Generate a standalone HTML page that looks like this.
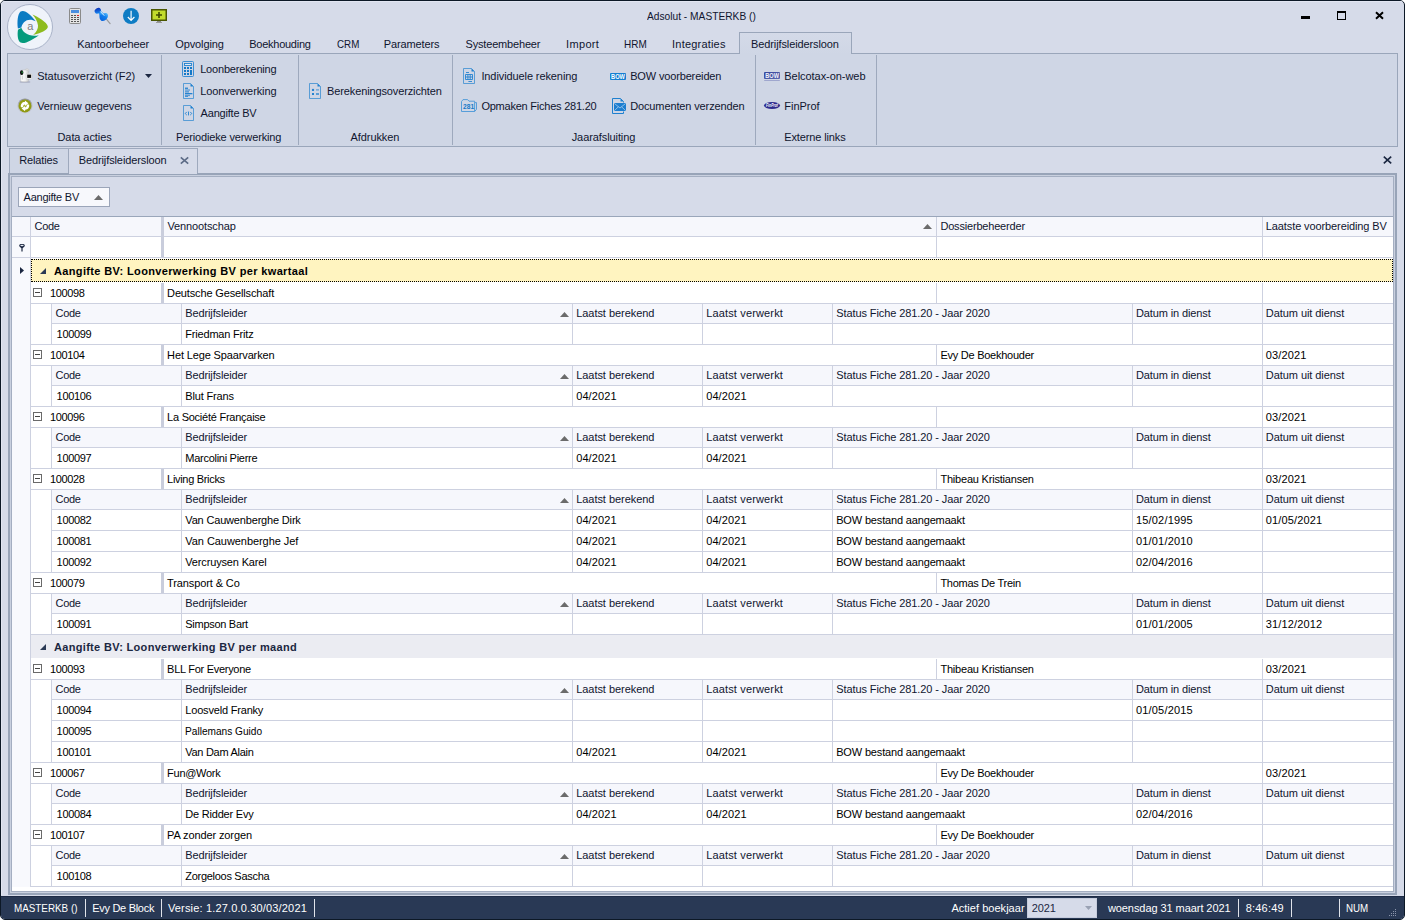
<!DOCTYPE html>
<html><head><meta charset="utf-8"><title>Adsolut - MASTERKB ()</title>
<style>
html,body{margin:0;padding:0;background:#fff;}
body{width:1405px;height:920px;position:relative;overflow:hidden;font:11px "Liberation Sans",sans-serif;}
#win{position:absolute;left:0;top:0;width:1403px;height:918px;background:#d6dbe9;border:1px solid #0c1826;border-radius:5px;overflow:hidden;}
#in{position:absolute;left:-1px;top:-1px;width:1405px;height:920px;}
.a{position:absolute;}
.t{position:absolute;white-space:nowrap;font:11px "Liberation Sans",sans-serif;line-height:13px;height:13px;}
svg{position:absolute;overflow:visible;}
</style></head><body>
<div id="win"><div id="in">

<div class="a" style="left:1px;top:1px;width:1403px;height:1px;background:#e2e6f2;"></div>
<div class="a" style="left:1px;top:2px;width:1px;height:893px;background:#e2e6f2;"></div>
<!-- ===== application button ===== -->
<div class="a" style="left:7px;top:4px;width:44px;height:44px;border-radius:50%;background:#eff3fa;border:1px solid #a9b3c8;"></div>
<svg style="left:7px;top:4px" width="46" height="46" viewBox="7 4 46 46">
 <path d="M17.9 28.6 C17 22 17.6 14 20.6 11.6 C24.2 9 30.4 14.2 35.7 21.3 C32 19 27 19 24 22.2 C22.2 24.2 21.5 26.6 21.4 27.5 Z" fill="#0a7bc2"/>
 <path d="M32.4 14.6 C38 17 47 22.5 47.8 26.3 C48.4 30 40 33.5 33.1 34.9 C36.5 32 38.3 28.5 38 25.5 C37.6 21.5 35 17.5 32.4 14.6 Z" fill="#8dbb1f"/>
 <path d="M18 29.7 C17.2 34 17.6 41 20.6 42.6 C24.5 44.6 33 39.5 38.8 35.2 C34 36.4 28.5 35.5 25 32.8 C22.8 31 21.6 28.6 21.4 27.7 Z" fill="#049a7c"/>
</svg>
<span class="t" style="left:27.3px;top:20px;font-size:11px;color:#7c7c7c;">a</span>

<!-- ===== quick access icons ===== -->
<svg style="left:69px;top:8px" width="12" height="16" viewBox="0 0 12 16">
 <rect x="0.5" y="0.5" width="11" height="15" rx="1" fill="#e4e4e4" stroke="#8a8a8a"/>
 <rect x="2" y="2" width="8" height="3" fill="#4a8fe0"/>
 <g fill="#555"><rect x="2" y="7" width="2" height="1"/><rect x="5" y="7" width="2" height="1"/>
 <rect x="2" y="9" width="2" height="1"/><rect x="5" y="9" width="2" height="1"/><rect x="8" y="9" width="2" height="1"/>
 <rect x="2" y="11" width="2" height="1"/><rect x="5" y="11" width="2" height="1"/><rect x="8" y="11" width="2" height="1"/>
 <rect x="2" y="13" width="2" height="1"/><rect x="5" y="13" width="2" height="1"/><rect x="8" y="13" width="2" height="1"/></g>
 <rect x="8" y="7" width="2" height="1" fill="#e02020"/>
</svg>
<svg style="left:90px;top:4px" width="24" height="24" viewBox="0 0 24 24">
 <defs><linearGradient id="pk" x1="0.7" y1="0" x2="0.2" y2="1"><stop offset="0" stop-color="#0a2fb8"/><stop offset="1" stop-color="#1c8ff5"/></linearGradient>
 <linearGradient id="pd" x1="1" y1="0" x2="0.2" y2="1"><stop offset="0" stop-color="#6ecbff"/><stop offset="0.45" stop-color="#1180ee"/><stop offset="1" stop-color="#0a62dc"/></linearGradient></defs>
 <path d="M16.2 14.9 L20.1 19.6" stroke="#9a9a9a" stroke-width="1.2" stroke-linecap="round"/>
 <path d="M8.4 8.8 L10.6 6.8 L14.6 10.4 L10.6 13.2 Z" fill="#2a98f4"/>
 <path d="M9.7 10.6 C9 13 9.6 16 11.6 16.9 C13.6 17.7 16.7 15.7 17.7 13.2 C18.7 10.8 17.5 8.7 15.2 8.9 C13.6 9.1 12.4 11.2 9.7 10.6 Z" fill="url(#pd)"/>
 <ellipse cx="7.8" cy="6.8" rx="3.3" ry="2.6" transform="rotate(-32 7.8 6.8)" fill="url(#pk)"/>
 <path d="M10.6 7.8 L14 11.4" stroke="#e4f5ff" stroke-width="1" stroke-linecap="round"/>
</svg>
<svg style="left:123px;top:8px" width="16" height="16" viewBox="0 0 16 16">
 <circle cx="8" cy="8" r="8" fill="#0e7cc4"/>
 <path d="M8.1 2.8 V12.2 M4.8 9 L8.1 12.5 L11.4 9" stroke="#fff" stroke-width="1.15" fill="none"/>
</svg>
<svg style="left:151px;top:9px" width="16" height="14" viewBox="0 0 16 14">
 <rect x="0.75" y="0.75" width="14.5" height="10.5" fill="#c2dc2c" stroke="#4a5600" stroke-width="1.5"/>
 <path d="M8 3 V9 M5 6 H11" stroke="#3f4a00" stroke-width="1.6"/>
 <rect x="6" y="12" width="4" height="1" fill="#8a8a8a"/><rect x="5" y="13" width="6" height="1" fill="#9a9a9a"/>
</svg>

<!-- window buttons -->
<div class="a" style="left:1301px;top:16px;width:9px;height:3px;background:#000"></div>
<div class="a" style="left:1337px;top:11px;width:7px;height:6px;border:1px solid #000;border-top-width:2px"></div>
<svg style="left:1375px;top:12px" width="9" height="7" viewBox="0 0 9 7"><path d="M1 0.3 L8 6.7 M8 0.3 L1 6.7" stroke="#000" stroke-width="2"/></svg>

<!-- ===== ribbon panel ===== -->
<div class="a" style="left:7px;top:53px;width:1389px;height:92px;background:#cfd6e5;border:1px solid #9aa6ba;"></div>
<div class="a" style="left:739px;top:32px;width:111px;height:21px;background:linear-gradient(#d4dae8,#cfd6e5);border:1px solid #9aa6ba;border-bottom:none;"></div>
<div class="a" style="left:161px;top:55px;width:1px;height:90px;background:#9ea9bd"></div>
<div class="a" style="left:298px;top:55px;width:1px;height:90px;background:#9ea9bd"></div>
<div class="a" style="left:452px;top:55px;width:1px;height:90px;background:#9ea9bd"></div>
<div class="a" style="left:755px;top:55px;width:1px;height:90px;background:#9ea9bd"></div>
<div class="a" style="left:876px;top:55px;width:1px;height:90px;background:#9ea9bd"></div>

<!-- ribbon icons -->
<!-- statusoverzicht -->
<svg style="left:19px;top:68px" width="13" height="15" viewBox="0 0 13 15">
 <defs><linearGradient id="cb" x1="0" y1="0" x2="1" y2="0"><stop offset="0" stop-color="#ffffff"/><stop offset="0.6" stop-color="#f1f1f1"/><stop offset="1" stop-color="#c8c8c8"/></linearGradient></defs>
 <ellipse cx="6" cy="13.9" rx="5.4" ry="0.9" fill="#aab0c2"/>
 <path d="M6.2 1.8 C6.4 0.5 9.6 0.3 9.8 1.8 V4 H6.2 Z" fill="#e4e4e4" stroke="#bdbdbd" stroke-width="0.5"/>
 <path d="M1.6 3.4 C1.6 2.4 3 2 5.4 2 C8 2 9.6 2.4 9.6 3.6 V12.2 C9.6 13.4 8 13.8 5.6 13.8 C3.2 13.8 1.6 13.4 1.6 12.2 Z" fill="url(#cb)" stroke="#bcbcbc" stroke-width="0.5"/>
 <path d="M3.3 7.6 V11.6" stroke="#c4c4c4" stroke-width="0.8"/>
 <ellipse cx="2.7" cy="4.7" rx="1.7" ry="2.4" fill="#0a0a0a"/><ellipse cx="3.2" cy="4.3" rx="0.6" ry="1.2" fill="#2a8a3a"/>
 <rect x="7.2" y="5.7" width="5.6" height="5.2" rx="0.6" fill="#fbfbfb" stroke="#c6c6c6" stroke-width="0.5"/>
 <rect x="8.2" y="6.6" width="3.9" height="3.3" fill="#0a0a0a"/>
</svg>
<svg style="left:145px;top:74px" width="7" height="4" viewBox="0 0 7 4"><path d="M0 0 H7 L3.5 4 Z" fill="#1b2741"/></svg>
<!-- vernieuw -->
<svg style="left:17px;top:98px" width="16" height="16" viewBox="0 0 16 16">
 <defs><linearGradient id="rg" x1="0" y1="0" x2="0" y2="1"><stop offset="0" stop-color="#8e9098"/><stop offset="0.5" stop-color="#b9bdc8"/><stop offset="1" stop-color="#c9cdd8"/></linearGradient>
 <radialGradient id="rr" cx="0.5" cy="0.45" r="0.6"><stop offset="0" stop-color="#a3ad22"/><stop offset="1" stop-color="#8a940e"/></radialGradient></defs>
 <circle cx="8" cy="7.9" r="7.5" fill="url(#rg)"/>
 <circle cx="8" cy="7.9" r="6.5" fill="url(#rr)"/>
 <path d="M3.9 9.2 C3.3 6 5.3 3.9 7.9 4 L7.9 2.5 L11.4 5.2 L7.9 7.9 L7.9 6.4 C6.6 6.4 6 7.5 6.3 9.2 Z" fill="#fff"/>
 <path d="M12.1 6.6 C12.7 9.8 10.7 11.9 8.1 11.8 L8.1 13.3 L4.6 10.6 L8.1 7.9 L8.1 9.4 C9.4 9.4 10 8.3 9.7 6.6 Z" fill="#fff"/>
</svg>
<!-- loonberekening (calculator) -->
<svg style="left:182px;top:61px" width="12" height="16" viewBox="0 0 12 16">
 <rect x="0.5" y="0.5" width="11" height="15" rx="0.9" fill="none" stroke="#2a86d0" stroke-width="0.9"/>
 <rect x="2.5" y="2.5" width="7" height="2" fill="#e4edf7" stroke="#1f80cf" stroke-width="0.9"/>
 <g fill="#1479c8"><rect x="2" y="6" width="2" height="2"/><rect x="5" y="6" width="2" height="2"/><rect x="8" y="6" width="2" height="2"/>
 <rect x="2" y="9" width="2" height="2"/><rect x="5" y="9" width="2" height="2"/><rect x="8" y="9" width="2" height="5"/>
 <rect x="2" y="12" width="2" height="2"/><rect x="5" y="12" width="2" height="2"/></g>
</svg>
<!-- loonverwerking -->
<svg style="left:183px;top:83px" width="11" height="16" viewBox="0 0 11 16">
 <path d="M0.5 0.5 H7.5 L10.5 3.5 V15.5 H0.5 Z" fill="none" stroke="#2a86d0" stroke-opacity="0.8" stroke-width="0.9"/>
 <path d="M7.5 0.5 V3.5 H10.5 Z" fill="#1f80cf"/>
 <g fill="#2583d0"><rect x="2" y="4.6" width="3" height="1.3"/><rect x="2" y="6.4" width="5" height="1.3" opacity=".7"/><rect x="2" y="8.2" width="4" height="1.3" opacity=".8"/><rect x="2" y="10" width="7.4" height="1.3"/><rect x="2" y="11.8" width="5" height="1.3" opacity=".7"/><rect x="2" y="13" width="3" height="1" opacity=".8"/></g>
</svg>
<!-- aangifte bv -->
<svg style="left:183px;top:105px" width="11" height="16" viewBox="0 0 11 16">
 <path d="M0.5 0.5 H7.5 L10.5 3.5 V15.5 H0.5 Z" fill="none" stroke="#2a86d0" stroke-opacity="0.8" stroke-width="0.9"/>
 <path d="M7.5 0.5 V3.5 H10.5 Z" fill="#1f80cf"/>
 <path d="M3.8 6.9 L2.2 8.5 L3.8 10.1 M7.2 6.9 L8.8 8.5 L7.2 10.1 M5.5 6.6 V10.4" stroke="#1f80cf" stroke-width="0.9" fill="none"/>
</svg>
<!-- berekeningsoverzichten -->
<svg style="left:309px;top:83px" width="12" height="16" viewBox="0 0 12 16">
 <path d="M0.5 0.5 H8.5 L11.5 3.5 V15.5 H0.5 Z" fill="none" stroke="#2a86d0" stroke-opacity="0.8" stroke-width="0.9"/>
 <path d="M8.5 0.5 V3.5 H11.5 Z" fill="#1f80cf"/>
 <g fill="#2583d0"><circle cx="4" cy="6.9" r="1.2"/><rect x="7" y="6.4" width="3" height="1" opacity=".8"/><rect x="3" y="10" width="2" height="2"/><rect x="7" y="10" width="3" height="2" opacity=".7"/></g>
</svg>
<!-- individuele rekening -->
<svg style="left:463px;top:68px" width="12" height="16" viewBox="0 0 12 16">
 <path d="M0.5 0.5 H8.5 L11.5 3.5 V15.5 H0.5 Z" fill="none" stroke="#2a86d0" stroke-opacity="0.8" stroke-width="0.9"/>
 <path d="M8.5 0.5 V3.5 H11.5 Z" fill="#1f80cf"/>
 <path d="M3 4.5 H6 M2.5 6.5 H9.5 V11.5 H2.5 Z M2.5 9 H9.5 M4.9 6.5 V11.5 M7.2 6.5 V11.5 M5.4 13.5 H9" stroke="#2583d0" stroke-width="0.9" fill="none"/>
</svg>
<!-- opmaken fiches (folder 281) -->
<svg style="left:461px;top:99px" width="16" height="13" viewBox="0 0 16 13">
 <path d="M0.5 12.5 V2.6 L2 0.6 H6.6 L8 2.2 H13.6 V3.6 H15.5 V10.4 L13.6 12.5 Z M13.6 3.6 V12.5" fill="none" stroke="#4a97d8" stroke-width="0.9"/>
 <text x="2.1" y="10.3" font-family="Liberation Sans, sans-serif" font-size="6.6" font-weight="bold" fill="#1479c8">281</text>
</svg>
<!-- BOW voorbereiden -->
<svg style="left:610px;top:73px" width="16" height="7" viewBox="0 0 16 7">
 <rect x="0" y="0" width="16" height="7" rx="1" fill="#157fd2"/>
 <text x="1.1" y="6" font-family="Liberation Sans, sans-serif" font-size="6.6" font-weight="bold" fill="#fff" textLength="13.8" lengthAdjust="spacingAndGlyphs">BOW</text>
</svg>
<!-- documenten verzenden -->
<svg style="left:612px;top:98px" width="14" height="16" viewBox="0 0 14 16">
 <path d="M11.5 4.5 V3.5 L8.5 0.5 H0.5 V15.5 H11.5 V13.5" fill="none" stroke="#1f80cf"/>
 <path d="M8.5 0.5 V3.5 H11.5 Z" fill="#1f80cf"/>
 <rect x="2" y="5" width="12" height="8" fill="#1c7ed0"/>
 <path d="M2.3 5.4 L8 10 L13.7 5.4 M2.3 12.7 L6.4 8.8 M13.7 12.7 L9.6 8.8" stroke="#bcd9f2" stroke-width="0.7" fill="none"/>
</svg>
<!-- belcotax -->
<svg style="left:764px;top:72px" width="16" height="9" viewBox="0 0 16 9">
 <defs><linearGradient id="bx" x1="0" y1="0" x2="1" y2="1"><stop offset="0" stop-color="#35459a"/><stop offset="1" stop-color="#5a68b0"/></linearGradient></defs>
 <rect x="0" y="0" width="16" height="7" rx="1" fill="url(#bx)"/>
 <text x="1.3" y="6" font-family="Liberation Sans, sans-serif" font-size="6.6" font-weight="bold" fill="#f4f5fb" textLength="13.6" lengthAdjust="spacingAndGlyphs">BOW</text>
 <rect x="0.2" y="8" width="15.6" height="0.9" fill="#8c94c4" opacity=".8"/>
</svg>
<!-- finprof -->
<svg style="left:764px;top:102px" width="16" height="7" viewBox="0 0 16 7">
 <ellipse cx="8" cy="3.5" rx="8" ry="3.5" fill="#2e2a8d"/>
 <text x="2" y="5.3" font-family="Liberation Sans, sans-serif" font-size="5" font-weight="bold" font-style="italic" fill="#fff" textLength="12" lengthAdjust="spacingAndGlyphs">FinProf</text>
</svg>

<!-- ===== document tabs ===== -->
<div class="a" style="left:9px;top:148px;width:58px;height:25px;background:#cfd6e5;border:1px solid #9ea9bd;border-bottom:none;"></div>
<svg style="left:1383px;top:156px" width="9" height="8" viewBox="0 0 9 8"><path d="M0.8 0.6 L8.2 7.4 M8.2 0.6 L0.8 7.4" stroke="#1b2741" stroke-width="1.6"/></svg>

<!-- ===== content frame ===== -->
<div class="a" style="left:8px;top:173px;width:1385px;height:718px;border:2px solid #98a4b8;"></div>
<div class="a" style="left:10px;top:175px;width:1383px;height:716px;border:1px solid #c9d0df;"></div>
<div class="a" style="left:11px;top:176px;width:1381px;height:714px;border:1px solid #a4aec1;background:#d6dbe9;"></div>

<div class="a" style="left:69px;top:148px;width:128px;height:25px;background:#d6dbe9;border-top:1px solid #9ea9bd;"></div>
<div class="a" style="left:197px;top:148px;width:1px;height:25px;background:#9ea9bd;"></div>
<svg style="left:180px;top:157px" width="9" height="7" viewBox="0 0 9 7"><path d="M0.8 0.3 L8.2 6.7 M8.2 0.3 L0.8 6.7" stroke="#5c6b86" stroke-width="1.6"/></svg>
<!-- group panel button -->
<div class="a" style="left:18px;top:187px;width:90px;height:18px;border:1px solid #9ba5b9;background:#f7f8fc;"></div>
<svg style="left:94px;top:195px" width="9" height="5" viewBox="0 0 9 5"><path d="M0 5 L4.5 0 L9 5Z" fill="#6b6b6b"/></svg>

<!-- ===== grid ===== -->
<div class="a" style="left:12px;top:216px;width:1381px;height:675px;background:#fff;"></div>
<div class="a" style="left:12px;top:216px;width:1381px;height:1px;background:#9aa6ba;"></div>
<!-- indicator column -->
<div class="a" style="left:12px;top:217px;width:18px;height:670px;background:#f8f9fd;"></div>
<div class="a" style="left:30px;top:217px;width:1px;height:670px;background:#cdd1e0;"></div>
<!-- header row -->
<div class="a" style="left:12px;top:217px;width:1381px;height:19px;background:#f6f7fc;"></div>
<div class="a" style="left:12px;top:236px;width:1381px;height:1px;background:#cdd1e0;"></div>
<div class="a" style="left:12px;top:257px;width:1381px;height:1px;background:#cdd1e0;"></div>
<div class="a" style="left:30px;top:217px;width:1px;height:41px;background:#cdd1e0;"></div>
<div class="a" style="left:161px;top:217px;width:3px;height:41px;background:#c9cddc;"></div>
<div class="a" style="left:936px;top:217px;width:1px;height:41px;background:#cdd1e0;"></div>
<div class="a" style="left:1262px;top:217px;width:1px;height:41px;background:#cdd1e0;"></div>
<svg style="left:923px;top:224px" width="9" height="5" viewBox="0 0 9 5"><path d="M0 5 L4.5 0 L9 5Z" fill="#6b6b6b"/></svg>
<!-- filter icon -->
<svg style="left:19px;top:244px" width="6" height="8" viewBox="0 0 6 8"><path d="M0.2 1.6 C0.2 0.4 1.6 0 3 0 C4.4 0 5.8 0.4 5.8 1.6 C5.8 2.6 4.6 3.4 3.6 4.2 V7.4 H2.4 V4.2 C1.4 3.4 0.2 2.6 0.2 1.6 Z" fill="#1b2741"/><ellipse cx="3" cy="1.5" rx="1.7" ry="0.7" fill="#e8ebf3"/></svg>
<!-- row indicator -->
<svg style="left:20px;top:267px" width="4" height="7" viewBox="0 0 4 7"><path d="M0 0 L4 3.5 L0 7Z" fill="#1b2741"/></svg>

<!-- group rows -->
<div class="a" style="left:31px;top:259px;width:1360px;height:21px;background:#fff4c0;border:1px dotted #000;"></div>
<svg style="left:40px;top:268px" width="6" height="6" viewBox="0 0 6 6"><path d="M6 0 V6 H0Z" fill="#2b3a55"/></svg>
<div class="a" style="left:31px;top:635px;width:1362px;height:23px;background:#ebecf2;"></div>
<svg style="left:40px;top:644px" width="6" height="6" viewBox="0 0 6 6"><path d="M6 0 V6 H0Z" fill="#2b3a55"/></svg>

<div style="position:absolute;left:33px;top:288px;width:7px;height:7px;border:1px solid #6a6a6a;background:#fff"></div>
<div style="position:absolute;left:35px;top:292px;width:5px;height:1px;background:#444;"></div>
<div style="position:absolute;left:161px;top:283px;width:3px;height:20px;background:#c9cddc;"></div>
<div style="position:absolute;left:936px;top:283px;width:1px;height:20px;background:#cdd1e0;"></div>
<div style="position:absolute;left:1262px;top:283px;width:1px;height:20px;background:#cdd1e0;"></div>
<div style="position:absolute;left:31px;top:303px;width:1362px;height:1px;background:#cdd1e0;"></div>
<div style="position:absolute;left:52px;top:304px;width:1341px;height:19px;background:#f6f7fc;"></div>
<div style="position:absolute;left:51px;top:304px;width:1px;height:19px;background:#cdd1e0;"></div>
<div style="position:absolute;left:181px;top:304px;width:1px;height:19px;background:#cdd1e0;"></div>
<div style="position:absolute;left:572px;top:304px;width:1px;height:19px;background:#cdd1e0;"></div>
<div style="position:absolute;left:702px;top:304px;width:1px;height:19px;background:#cdd1e0;"></div>
<div style="position:absolute;left:832px;top:304px;width:1px;height:19px;background:#cdd1e0;"></div>
<div style="position:absolute;left:1132px;top:304px;width:1px;height:19px;background:#cdd1e0;"></div>
<div style="position:absolute;left:1262px;top:304px;width:1px;height:19px;background:#cdd1e0;"></div>
<div style="position:absolute;left:51px;top:323px;width:1342px;height:1px;background:#cdd1e0;"></div>
<div style="position:absolute;left:51px;top:324px;width:1px;height:20px;background:#cdd1e0;"></div>
<div style="position:absolute;left:181px;top:324px;width:1px;height:20px;background:#cdd1e0;"></div>
<div style="position:absolute;left:572px;top:324px;width:1px;height:20px;background:#cdd1e0;"></div>
<div style="position:absolute;left:702px;top:324px;width:1px;height:20px;background:#cdd1e0;"></div>
<div style="position:absolute;left:832px;top:324px;width:1px;height:20px;background:#cdd1e0;"></div>
<div style="position:absolute;left:1132px;top:324px;width:1px;height:20px;background:#cdd1e0;"></div>
<div style="position:absolute;left:1262px;top:324px;width:1px;height:20px;background:#cdd1e0;"></div>
<div style="position:absolute;left:31px;top:344px;width:1362px;height:1px;background:#cdd1e0;"></div>
<div style="position:absolute;left:33px;top:350px;width:7px;height:7px;border:1px solid #6a6a6a;background:#fff"></div>
<div style="position:absolute;left:35px;top:354px;width:5px;height:1px;background:#444;"></div>
<div style="position:absolute;left:161px;top:345px;width:3px;height:20px;background:#c9cddc;"></div>
<div style="position:absolute;left:936px;top:345px;width:1px;height:20px;background:#cdd1e0;"></div>
<div style="position:absolute;left:1262px;top:345px;width:1px;height:20px;background:#cdd1e0;"></div>
<div style="position:absolute;left:31px;top:365px;width:1362px;height:1px;background:#cdd1e0;"></div>
<div style="position:absolute;left:52px;top:366px;width:1341px;height:19px;background:#f6f7fc;"></div>
<div style="position:absolute;left:51px;top:366px;width:1px;height:19px;background:#cdd1e0;"></div>
<div style="position:absolute;left:181px;top:366px;width:1px;height:19px;background:#cdd1e0;"></div>
<div style="position:absolute;left:572px;top:366px;width:1px;height:19px;background:#cdd1e0;"></div>
<div style="position:absolute;left:702px;top:366px;width:1px;height:19px;background:#cdd1e0;"></div>
<div style="position:absolute;left:832px;top:366px;width:1px;height:19px;background:#cdd1e0;"></div>
<div style="position:absolute;left:1132px;top:366px;width:1px;height:19px;background:#cdd1e0;"></div>
<div style="position:absolute;left:1262px;top:366px;width:1px;height:19px;background:#cdd1e0;"></div>
<div style="position:absolute;left:51px;top:385px;width:1342px;height:1px;background:#cdd1e0;"></div>
<div style="position:absolute;left:51px;top:386px;width:1px;height:20px;background:#cdd1e0;"></div>
<div style="position:absolute;left:181px;top:386px;width:1px;height:20px;background:#cdd1e0;"></div>
<div style="position:absolute;left:572px;top:386px;width:1px;height:20px;background:#cdd1e0;"></div>
<div style="position:absolute;left:702px;top:386px;width:1px;height:20px;background:#cdd1e0;"></div>
<div style="position:absolute;left:832px;top:386px;width:1px;height:20px;background:#cdd1e0;"></div>
<div style="position:absolute;left:1132px;top:386px;width:1px;height:20px;background:#cdd1e0;"></div>
<div style="position:absolute;left:1262px;top:386px;width:1px;height:20px;background:#cdd1e0;"></div>
<div style="position:absolute;left:31px;top:406px;width:1362px;height:1px;background:#cdd1e0;"></div>
<div style="position:absolute;left:33px;top:412px;width:7px;height:7px;border:1px solid #6a6a6a;background:#fff"></div>
<div style="position:absolute;left:35px;top:416px;width:5px;height:1px;background:#444;"></div>
<div style="position:absolute;left:161px;top:407px;width:3px;height:20px;background:#c9cddc;"></div>
<div style="position:absolute;left:936px;top:407px;width:1px;height:20px;background:#cdd1e0;"></div>
<div style="position:absolute;left:1262px;top:407px;width:1px;height:20px;background:#cdd1e0;"></div>
<div style="position:absolute;left:31px;top:427px;width:1362px;height:1px;background:#cdd1e0;"></div>
<div style="position:absolute;left:52px;top:428px;width:1341px;height:19px;background:#f6f7fc;"></div>
<div style="position:absolute;left:51px;top:428px;width:1px;height:19px;background:#cdd1e0;"></div>
<div style="position:absolute;left:181px;top:428px;width:1px;height:19px;background:#cdd1e0;"></div>
<div style="position:absolute;left:572px;top:428px;width:1px;height:19px;background:#cdd1e0;"></div>
<div style="position:absolute;left:702px;top:428px;width:1px;height:19px;background:#cdd1e0;"></div>
<div style="position:absolute;left:832px;top:428px;width:1px;height:19px;background:#cdd1e0;"></div>
<div style="position:absolute;left:1132px;top:428px;width:1px;height:19px;background:#cdd1e0;"></div>
<div style="position:absolute;left:1262px;top:428px;width:1px;height:19px;background:#cdd1e0;"></div>
<div style="position:absolute;left:51px;top:447px;width:1342px;height:1px;background:#cdd1e0;"></div>
<div style="position:absolute;left:51px;top:448px;width:1px;height:20px;background:#cdd1e0;"></div>
<div style="position:absolute;left:181px;top:448px;width:1px;height:20px;background:#cdd1e0;"></div>
<div style="position:absolute;left:572px;top:448px;width:1px;height:20px;background:#cdd1e0;"></div>
<div style="position:absolute;left:702px;top:448px;width:1px;height:20px;background:#cdd1e0;"></div>
<div style="position:absolute;left:832px;top:448px;width:1px;height:20px;background:#cdd1e0;"></div>
<div style="position:absolute;left:1132px;top:448px;width:1px;height:20px;background:#cdd1e0;"></div>
<div style="position:absolute;left:1262px;top:448px;width:1px;height:20px;background:#cdd1e0;"></div>
<div style="position:absolute;left:31px;top:468px;width:1362px;height:1px;background:#cdd1e0;"></div>
<div style="position:absolute;left:33px;top:474px;width:7px;height:7px;border:1px solid #6a6a6a;background:#fff"></div>
<div style="position:absolute;left:35px;top:478px;width:5px;height:1px;background:#444;"></div>
<div style="position:absolute;left:161px;top:469px;width:3px;height:20px;background:#c9cddc;"></div>
<div style="position:absolute;left:936px;top:469px;width:1px;height:20px;background:#cdd1e0;"></div>
<div style="position:absolute;left:1262px;top:469px;width:1px;height:20px;background:#cdd1e0;"></div>
<div style="position:absolute;left:31px;top:489px;width:1362px;height:1px;background:#cdd1e0;"></div>
<div style="position:absolute;left:52px;top:490px;width:1341px;height:19px;background:#f6f7fc;"></div>
<div style="position:absolute;left:51px;top:490px;width:1px;height:19px;background:#cdd1e0;"></div>
<div style="position:absolute;left:181px;top:490px;width:1px;height:19px;background:#cdd1e0;"></div>
<div style="position:absolute;left:572px;top:490px;width:1px;height:19px;background:#cdd1e0;"></div>
<div style="position:absolute;left:702px;top:490px;width:1px;height:19px;background:#cdd1e0;"></div>
<div style="position:absolute;left:832px;top:490px;width:1px;height:19px;background:#cdd1e0;"></div>
<div style="position:absolute;left:1132px;top:490px;width:1px;height:19px;background:#cdd1e0;"></div>
<div style="position:absolute;left:1262px;top:490px;width:1px;height:19px;background:#cdd1e0;"></div>
<div style="position:absolute;left:51px;top:509px;width:1342px;height:1px;background:#cdd1e0;"></div>
<div style="position:absolute;left:51px;top:510px;width:1px;height:20px;background:#cdd1e0;"></div>
<div style="position:absolute;left:181px;top:510px;width:1px;height:20px;background:#cdd1e0;"></div>
<div style="position:absolute;left:572px;top:510px;width:1px;height:20px;background:#cdd1e0;"></div>
<div style="position:absolute;left:702px;top:510px;width:1px;height:20px;background:#cdd1e0;"></div>
<div style="position:absolute;left:832px;top:510px;width:1px;height:20px;background:#cdd1e0;"></div>
<div style="position:absolute;left:1132px;top:510px;width:1px;height:20px;background:#cdd1e0;"></div>
<div style="position:absolute;left:1262px;top:510px;width:1px;height:20px;background:#cdd1e0;"></div>
<div style="position:absolute;left:51px;top:530px;width:1342px;height:1px;background:#cdd1e0;"></div>
<div style="position:absolute;left:51px;top:531px;width:1px;height:20px;background:#cdd1e0;"></div>
<div style="position:absolute;left:181px;top:531px;width:1px;height:20px;background:#cdd1e0;"></div>
<div style="position:absolute;left:572px;top:531px;width:1px;height:20px;background:#cdd1e0;"></div>
<div style="position:absolute;left:702px;top:531px;width:1px;height:20px;background:#cdd1e0;"></div>
<div style="position:absolute;left:832px;top:531px;width:1px;height:20px;background:#cdd1e0;"></div>
<div style="position:absolute;left:1132px;top:531px;width:1px;height:20px;background:#cdd1e0;"></div>
<div style="position:absolute;left:1262px;top:531px;width:1px;height:20px;background:#cdd1e0;"></div>
<div style="position:absolute;left:51px;top:551px;width:1342px;height:1px;background:#cdd1e0;"></div>
<div style="position:absolute;left:51px;top:552px;width:1px;height:20px;background:#cdd1e0;"></div>
<div style="position:absolute;left:181px;top:552px;width:1px;height:20px;background:#cdd1e0;"></div>
<div style="position:absolute;left:572px;top:552px;width:1px;height:20px;background:#cdd1e0;"></div>
<div style="position:absolute;left:702px;top:552px;width:1px;height:20px;background:#cdd1e0;"></div>
<div style="position:absolute;left:832px;top:552px;width:1px;height:20px;background:#cdd1e0;"></div>
<div style="position:absolute;left:1132px;top:552px;width:1px;height:20px;background:#cdd1e0;"></div>
<div style="position:absolute;left:1262px;top:552px;width:1px;height:20px;background:#cdd1e0;"></div>
<div style="position:absolute;left:31px;top:572px;width:1362px;height:1px;background:#cdd1e0;"></div>
<div style="position:absolute;left:33px;top:578px;width:7px;height:7px;border:1px solid #6a6a6a;background:#fff"></div>
<div style="position:absolute;left:35px;top:582px;width:5px;height:1px;background:#444;"></div>
<div style="position:absolute;left:161px;top:573px;width:3px;height:20px;background:#c9cddc;"></div>
<div style="position:absolute;left:936px;top:573px;width:1px;height:20px;background:#cdd1e0;"></div>
<div style="position:absolute;left:1262px;top:573px;width:1px;height:20px;background:#cdd1e0;"></div>
<div style="position:absolute;left:31px;top:593px;width:1362px;height:1px;background:#cdd1e0;"></div>
<div style="position:absolute;left:52px;top:594px;width:1341px;height:19px;background:#f6f7fc;"></div>
<div style="position:absolute;left:51px;top:594px;width:1px;height:19px;background:#cdd1e0;"></div>
<div style="position:absolute;left:181px;top:594px;width:1px;height:19px;background:#cdd1e0;"></div>
<div style="position:absolute;left:572px;top:594px;width:1px;height:19px;background:#cdd1e0;"></div>
<div style="position:absolute;left:702px;top:594px;width:1px;height:19px;background:#cdd1e0;"></div>
<div style="position:absolute;left:832px;top:594px;width:1px;height:19px;background:#cdd1e0;"></div>
<div style="position:absolute;left:1132px;top:594px;width:1px;height:19px;background:#cdd1e0;"></div>
<div style="position:absolute;left:1262px;top:594px;width:1px;height:19px;background:#cdd1e0;"></div>
<div style="position:absolute;left:51px;top:613px;width:1342px;height:1px;background:#cdd1e0;"></div>
<div style="position:absolute;left:51px;top:614px;width:1px;height:20px;background:#cdd1e0;"></div>
<div style="position:absolute;left:181px;top:614px;width:1px;height:20px;background:#cdd1e0;"></div>
<div style="position:absolute;left:572px;top:614px;width:1px;height:20px;background:#cdd1e0;"></div>
<div style="position:absolute;left:702px;top:614px;width:1px;height:20px;background:#cdd1e0;"></div>
<div style="position:absolute;left:832px;top:614px;width:1px;height:20px;background:#cdd1e0;"></div>
<div style="position:absolute;left:1132px;top:614px;width:1px;height:20px;background:#cdd1e0;"></div>
<div style="position:absolute;left:1262px;top:614px;width:1px;height:20px;background:#cdd1e0;"></div>
<div style="position:absolute;left:31px;top:634px;width:1362px;height:1px;background:#cdd1e0;"></div>
<div style="position:absolute;left:33px;top:664px;width:7px;height:7px;border:1px solid #6a6a6a;background:#fff"></div>
<div style="position:absolute;left:35px;top:668px;width:5px;height:1px;background:#444;"></div>
<div style="position:absolute;left:161px;top:659px;width:3px;height:20px;background:#c9cddc;"></div>
<div style="position:absolute;left:936px;top:659px;width:1px;height:20px;background:#cdd1e0;"></div>
<div style="position:absolute;left:1262px;top:659px;width:1px;height:20px;background:#cdd1e0;"></div>
<div style="position:absolute;left:31px;top:679px;width:1362px;height:1px;background:#cdd1e0;"></div>
<div style="position:absolute;left:52px;top:680px;width:1341px;height:19px;background:#f6f7fc;"></div>
<div style="position:absolute;left:51px;top:680px;width:1px;height:19px;background:#cdd1e0;"></div>
<div style="position:absolute;left:181px;top:680px;width:1px;height:19px;background:#cdd1e0;"></div>
<div style="position:absolute;left:572px;top:680px;width:1px;height:19px;background:#cdd1e0;"></div>
<div style="position:absolute;left:702px;top:680px;width:1px;height:19px;background:#cdd1e0;"></div>
<div style="position:absolute;left:832px;top:680px;width:1px;height:19px;background:#cdd1e0;"></div>
<div style="position:absolute;left:1132px;top:680px;width:1px;height:19px;background:#cdd1e0;"></div>
<div style="position:absolute;left:1262px;top:680px;width:1px;height:19px;background:#cdd1e0;"></div>
<div style="position:absolute;left:51px;top:699px;width:1342px;height:1px;background:#cdd1e0;"></div>
<div style="position:absolute;left:51px;top:700px;width:1px;height:20px;background:#cdd1e0;"></div>
<div style="position:absolute;left:181px;top:700px;width:1px;height:20px;background:#cdd1e0;"></div>
<div style="position:absolute;left:572px;top:700px;width:1px;height:20px;background:#cdd1e0;"></div>
<div style="position:absolute;left:702px;top:700px;width:1px;height:20px;background:#cdd1e0;"></div>
<div style="position:absolute;left:832px;top:700px;width:1px;height:20px;background:#cdd1e0;"></div>
<div style="position:absolute;left:1132px;top:700px;width:1px;height:20px;background:#cdd1e0;"></div>
<div style="position:absolute;left:1262px;top:700px;width:1px;height:20px;background:#cdd1e0;"></div>
<div style="position:absolute;left:51px;top:720px;width:1342px;height:1px;background:#cdd1e0;"></div>
<div style="position:absolute;left:51px;top:721px;width:1px;height:20px;background:#cdd1e0;"></div>
<div style="position:absolute;left:181px;top:721px;width:1px;height:20px;background:#cdd1e0;"></div>
<div style="position:absolute;left:572px;top:721px;width:1px;height:20px;background:#cdd1e0;"></div>
<div style="position:absolute;left:702px;top:721px;width:1px;height:20px;background:#cdd1e0;"></div>
<div style="position:absolute;left:832px;top:721px;width:1px;height:20px;background:#cdd1e0;"></div>
<div style="position:absolute;left:1132px;top:721px;width:1px;height:20px;background:#cdd1e0;"></div>
<div style="position:absolute;left:1262px;top:721px;width:1px;height:20px;background:#cdd1e0;"></div>
<div style="position:absolute;left:51px;top:741px;width:1342px;height:1px;background:#cdd1e0;"></div>
<div style="position:absolute;left:51px;top:742px;width:1px;height:20px;background:#cdd1e0;"></div>
<div style="position:absolute;left:181px;top:742px;width:1px;height:20px;background:#cdd1e0;"></div>
<div style="position:absolute;left:572px;top:742px;width:1px;height:20px;background:#cdd1e0;"></div>
<div style="position:absolute;left:702px;top:742px;width:1px;height:20px;background:#cdd1e0;"></div>
<div style="position:absolute;left:832px;top:742px;width:1px;height:20px;background:#cdd1e0;"></div>
<div style="position:absolute;left:1132px;top:742px;width:1px;height:20px;background:#cdd1e0;"></div>
<div style="position:absolute;left:1262px;top:742px;width:1px;height:20px;background:#cdd1e0;"></div>
<div style="position:absolute;left:31px;top:762px;width:1362px;height:1px;background:#cdd1e0;"></div>
<div style="position:absolute;left:33px;top:768px;width:7px;height:7px;border:1px solid #6a6a6a;background:#fff"></div>
<div style="position:absolute;left:35px;top:772px;width:5px;height:1px;background:#444;"></div>
<div style="position:absolute;left:161px;top:763px;width:3px;height:20px;background:#c9cddc;"></div>
<div style="position:absolute;left:936px;top:763px;width:1px;height:20px;background:#cdd1e0;"></div>
<div style="position:absolute;left:1262px;top:763px;width:1px;height:20px;background:#cdd1e0;"></div>
<div style="position:absolute;left:31px;top:783px;width:1362px;height:1px;background:#cdd1e0;"></div>
<div style="position:absolute;left:52px;top:784px;width:1341px;height:19px;background:#f6f7fc;"></div>
<div style="position:absolute;left:51px;top:784px;width:1px;height:19px;background:#cdd1e0;"></div>
<div style="position:absolute;left:181px;top:784px;width:1px;height:19px;background:#cdd1e0;"></div>
<div style="position:absolute;left:572px;top:784px;width:1px;height:19px;background:#cdd1e0;"></div>
<div style="position:absolute;left:702px;top:784px;width:1px;height:19px;background:#cdd1e0;"></div>
<div style="position:absolute;left:832px;top:784px;width:1px;height:19px;background:#cdd1e0;"></div>
<div style="position:absolute;left:1132px;top:784px;width:1px;height:19px;background:#cdd1e0;"></div>
<div style="position:absolute;left:1262px;top:784px;width:1px;height:19px;background:#cdd1e0;"></div>
<div style="position:absolute;left:51px;top:803px;width:1342px;height:1px;background:#cdd1e0;"></div>
<div style="position:absolute;left:51px;top:804px;width:1px;height:20px;background:#cdd1e0;"></div>
<div style="position:absolute;left:181px;top:804px;width:1px;height:20px;background:#cdd1e0;"></div>
<div style="position:absolute;left:572px;top:804px;width:1px;height:20px;background:#cdd1e0;"></div>
<div style="position:absolute;left:702px;top:804px;width:1px;height:20px;background:#cdd1e0;"></div>
<div style="position:absolute;left:832px;top:804px;width:1px;height:20px;background:#cdd1e0;"></div>
<div style="position:absolute;left:1132px;top:804px;width:1px;height:20px;background:#cdd1e0;"></div>
<div style="position:absolute;left:1262px;top:804px;width:1px;height:20px;background:#cdd1e0;"></div>
<div style="position:absolute;left:31px;top:824px;width:1362px;height:1px;background:#cdd1e0;"></div>
<div style="position:absolute;left:33px;top:830px;width:7px;height:7px;border:1px solid #6a6a6a;background:#fff"></div>
<div style="position:absolute;left:35px;top:834px;width:5px;height:1px;background:#444;"></div>
<div style="position:absolute;left:161px;top:825px;width:3px;height:20px;background:#c9cddc;"></div>
<div style="position:absolute;left:936px;top:825px;width:1px;height:20px;background:#cdd1e0;"></div>
<div style="position:absolute;left:1262px;top:825px;width:1px;height:20px;background:#cdd1e0;"></div>
<div style="position:absolute;left:31px;top:845px;width:1362px;height:1px;background:#cdd1e0;"></div>
<div style="position:absolute;left:52px;top:846px;width:1341px;height:19px;background:#f6f7fc;"></div>
<div style="position:absolute;left:51px;top:846px;width:1px;height:19px;background:#cdd1e0;"></div>
<div style="position:absolute;left:181px;top:846px;width:1px;height:19px;background:#cdd1e0;"></div>
<div style="position:absolute;left:572px;top:846px;width:1px;height:19px;background:#cdd1e0;"></div>
<div style="position:absolute;left:702px;top:846px;width:1px;height:19px;background:#cdd1e0;"></div>
<div style="position:absolute;left:832px;top:846px;width:1px;height:19px;background:#cdd1e0;"></div>
<div style="position:absolute;left:1132px;top:846px;width:1px;height:19px;background:#cdd1e0;"></div>
<div style="position:absolute;left:1262px;top:846px;width:1px;height:19px;background:#cdd1e0;"></div>
<div style="position:absolute;left:51px;top:865px;width:1342px;height:1px;background:#cdd1e0;"></div>
<div style="position:absolute;left:51px;top:866px;width:1px;height:20px;background:#cdd1e0;"></div>
<div style="position:absolute;left:181px;top:866px;width:1px;height:20px;background:#cdd1e0;"></div>
<div style="position:absolute;left:572px;top:866px;width:1px;height:20px;background:#cdd1e0;"></div>
<div style="position:absolute;left:702px;top:866px;width:1px;height:20px;background:#cdd1e0;"></div>
<div style="position:absolute;left:832px;top:866px;width:1px;height:20px;background:#cdd1e0;"></div>
<div style="position:absolute;left:1132px;top:866px;width:1px;height:20px;background:#cdd1e0;"></div>
<div style="position:absolute;left:1262px;top:866px;width:1px;height:20px;background:#cdd1e0;"></div>
<div style="position:absolute;left:31px;top:886px;width:1362px;height:1px;background:#cdd1e0;"></div>
<svg style="position:absolute;left:559.5px;top:311.5px" width="9" height="5" viewBox="0 0 9 5"><path d="M0 5 L4.5 0 L9 5Z" fill="#6b6b6b"/></svg>
<svg style="position:absolute;left:559.5px;top:373.5px" width="9" height="5" viewBox="0 0 9 5"><path d="M0 5 L4.5 0 L9 5Z" fill="#6b6b6b"/></svg>
<svg style="position:absolute;left:559.5px;top:435.5px" width="9" height="5" viewBox="0 0 9 5"><path d="M0 5 L4.5 0 L9 5Z" fill="#6b6b6b"/></svg>
<svg style="position:absolute;left:559.5px;top:497.5px" width="9" height="5" viewBox="0 0 9 5"><path d="M0 5 L4.5 0 L9 5Z" fill="#6b6b6b"/></svg>
<svg style="position:absolute;left:559.5px;top:601.5px" width="9" height="5" viewBox="0 0 9 5"><path d="M0 5 L4.5 0 L9 5Z" fill="#6b6b6b"/></svg>
<svg style="position:absolute;left:559.5px;top:687.5px" width="9" height="5" viewBox="0 0 9 5"><path d="M0 5 L4.5 0 L9 5Z" fill="#6b6b6b"/></svg>
<svg style="position:absolute;left:559.5px;top:791.5px" width="9" height="5" viewBox="0 0 9 5"><path d="M0 5 L4.5 0 L9 5Z" fill="#6b6b6b"/></svg>
<svg style="position:absolute;left:559.5px;top:853.5px" width="9" height="5" viewBox="0 0 9 5"><path d="M0 5 L4.5 0 L9 5Z" fill="#6b6b6b"/></svg>

<!-- ===== status bar ===== -->
<div class="a" style="left:0;top:896px;width:1405px;height:24px;background:#293955;"></div>
<div class="a" style="left:0;top:896px;width:1405px;height:1px;background:#1d2a45;"></div>
<div class="a" style="left:85px;top:899px;width:1px;height:18px;background:#e0e3ea"></div>
<div class="a" style="left:161px;top:899px;width:1px;height:18px;background:#e0e3ea"></div>
<div class="a" style="left:314px;top:899px;width:1px;height:18px;background:#e0e3ea"></div>
<div class="a" style="left:1238px;top:899px;width:1px;height:18px;background:#e0e3ea"></div>
<div class="a" style="left:1291px;top:899px;width:1px;height:18px;background:#e0e3ea"></div>
<div class="a" style="left:1339px;top:899px;width:1px;height:18px;background:#e0e3ea"></div>
<div class="a" style="left:1027px;top:898px;width:68px;height:18px;background:#d6dbe9;border:1px solid #c6ccdc;"></div>
<svg style="left:1085px;top:906px" width="7" height="4" viewBox="0 0 7 4"><path d="M0 0 H7 L3.5 4 Z" fill="#9aa2b4"/></svg>
<svg style="left:1388px;top:909px" width="9" height="9" viewBox="0 0 9 9"><g fill="#8b95ab"><rect x="7" y="0" width="1" height="1"/><rect x="5" y="2" width="1" height="1"/><rect x="7" y="2" width="1" height="1"/><rect x="3" y="4" width="1" height="1"/><rect x="5" y="4" width="1" height="1"/><rect x="7" y="4" width="1" height="1"/><rect x="1" y="6" width="1" height="1"/><rect x="3" y="6" width="1" height="1"/><rect x="5" y="6" width="1" height="1"/><rect x="7" y="6" width="1" height="1"/></g></svg>

<span class="t" style="left:646.6px;top:10px;color:#10152f;letter-spacing:0.000px;transform-origin:0 0;transform:scaleX(0.9271);">Adsolut - MASTERKB ()</span>
<span class="t" style="left:77.2px;top:38px;color:#10152f;letter-spacing:-0.060px;">Kantoorbeheer</span>
<span class="t" style="left:175.3px;top:38px;color:#10152f;letter-spacing:-0.127px;">Opvolging</span>
<span class="t" style="left:249.2px;top:38px;color:#10152f;letter-spacing:-0.249px;">Boekhouding</span>
<span class="t" style="left:336.5px;top:38px;color:#10152f;letter-spacing:0.000px;transform-origin:0 0;transform:scaleX(0.8898);">CRM</span>
<span class="t" style="left:383.7px;top:38px;color:#10152f;letter-spacing:-0.116px;">Parameters</span>
<span class="t" style="left:465.5px;top:38px;color:#10152f;letter-spacing:-0.173px;">Systeembeheer</span>
<span class="t" style="left:566.1px;top:38px;color:#10152f;letter-spacing:0.319px;">Import</span>
<span class="t" style="left:624.0px;top:38px;color:#10152f;letter-spacing:0.000px;transform-origin:0 0;transform:scaleX(0.9057);">HRM</span>
<span class="t" style="left:672.1px;top:38px;color:#10152f;letter-spacing:0.193px;">Integraties</span>
<span class="t" style="left:751.0px;top:38px;color:#10152f;letter-spacing:-0.110px;">Bedrijfsleidersloon</span>
<span class="t" style="left:37.2px;top:70px;color:#10152f;letter-spacing:-0.021px;">Statusoverzicht (F2)</span>
<span class="t" style="left:37.2px;top:100px;color:#10152f;letter-spacing:-0.095px;">Vernieuw gegevens</span>
<span class="t" style="left:57.5px;top:131px;color:#10152f;letter-spacing:-0.085px;">Data acties</span>
<span class="t" style="left:200.2px;top:63px;color:#10152f;letter-spacing:-0.186px;">Loonberekening</span>
<span class="t" style="left:200.2px;top:85px;color:#10152f;letter-spacing:-0.097px;">Loonverwerking</span>
<span class="t" style="left:200.6px;top:107px;color:#10152f;letter-spacing:-0.199px;">Aangifte BV</span>
<span class="t" style="left:176.0px;top:131px;color:#10152f;letter-spacing:-0.139px;">Periodieke verwerking</span>
<span class="t" style="left:327.1px;top:85px;color:#10152f;letter-spacing:-0.128px;">Berekeningsoverzichten</span>
<span class="t" style="left:350.6px;top:131px;color:#10152f;letter-spacing:-0.092px;">Afdrukken</span>
<span class="t" style="left:481.4px;top:70px;color:#10152f;letter-spacing:-0.098px;">Individuele rekening</span>
<span class="t" style="left:481.4px;top:100px;color:#10152f;letter-spacing:-0.227px;">Opmaken Fiches 281.20</span>
<span class="t" style="left:630.2px;top:70px;color:#10152f;letter-spacing:-0.153px;">BOW voorbereiden</span>
<span class="t" style="left:630.2px;top:100px;color:#10152f;letter-spacing:-0.125px;">Documenten verzenden</span>
<span class="t" style="left:571.7px;top:131px;color:#10152f;letter-spacing:-0.088px;">Jaarafsluiting</span>
<span class="t" style="left:784.3px;top:70px;color:#10152f;letter-spacing:-0.049px;">Belcotax-on-web</span>
<span class="t" style="left:784.3px;top:100px;color:#10152f;letter-spacing:-0.038px;">FinProf</span>
<span class="t" style="left:784.3px;top:131px;color:#10152f;letter-spacing:-0.130px;">Externe links</span>
<span class="t" style="left:19.3px;top:154px;color:#10152f;letter-spacing:-0.144px;">Relaties</span>
<span class="t" style="left:78.7px;top:154px;color:#10152f;letter-spacing:-0.105px;">Bedrijfsleidersloon</span>
<span class="t" style="left:23.6px;top:191px;color:#10152f;letter-spacing:-0.245px;">Aangifte BV</span>
<span class="t" style="left:34.6px;top:220px;color:#10152f;letter-spacing:-0.349px;">Code</span>
<span class="t" style="left:167.5px;top:220px;color:#10152f;letter-spacing:-0.128px;">Vennootschap</span>
<span class="t" style="left:940.4px;top:220px;color:#10152f;letter-spacing:-0.184px;">Dossierbeheerder</span>
<span class="t" style="left:1265.8px;top:220px;color:#10152f;letter-spacing:-0.105px;">Laatste voorbereiding BV</span>
<span class="t" style="left:54.0px;top:265px;color:#000;letter-spacing:0.351px;font-weight:bold;">Aangifte BV: Loonverwerking BV per kwartaal</span>
<span class="t" style="left:54.0px;top:641px;color:#1b2741;letter-spacing:0.314px;font-weight:bold;">Aangifte BV: Loonverwerking BV per maand</span>
<span class="t" style="left:14.2px;top:902px;color:#ffffff;letter-spacing:0.000px;transform-origin:0 0;transform:scaleX(0.8955);">MASTERKB ()</span>
<span class="t" style="left:92.3px;top:902px;color:#ffffff;letter-spacing:-0.302px;">Evy De Block</span>
<span class="t" style="left:167.9px;top:902px;color:#ffffff;letter-spacing:0.168px;">Versie: 1.27.0.0.30/03/2021</span>
<span class="t" style="left:951.4px;top:902px;color:#ffffff;letter-spacing:0.029px;">Actief boekjaar</span>
<span class="t" style="left:1031.7px;top:902px;color:#1b2741;letter-spacing:-0.121px;">2021</span>
<span class="t" style="left:1107.9px;top:902px;color:#ffffff;letter-spacing:-0.066px;">woensdag 31 maart 2021</span>
<span class="t" style="left:1245.7px;top:902px;color:#ffffff;letter-spacing:0.200px;">8:46:49</span>
<span class="t" style="left:1346.4px;top:902px;color:#ffffff;letter-spacing:0.000px;transform-origin:0 0;transform:scaleX(0.8858);">NUM</span>
<span class="t" style="left:49.9px;top:287px;color:#000;letter-spacing:-0.336px;">100098</span>
<span class="t" style="left:167.1px;top:287px;color:#000;letter-spacing:-0.146px;">Deutsche Gesellschaft</span>
<span class="t" style="left:55.6px;top:307px;color:#10152f;letter-spacing:-0.349px;">Code</span>
<span class="t" style="left:185.3px;top:307px;color:#10152f;letter-spacing:-0.128px;">Bedrijfsleider</span>
<span class="t" style="left:576.2px;top:307px;color:#10152f;letter-spacing:-0.046px;">Laatst berekend</span>
<span class="t" style="left:706.2px;top:307px;color:#10152f;letter-spacing:0.147px;">Laatst verwerkt</span>
<span class="t" style="left:836.2px;top:307px;color:#10152f;letter-spacing:-0.092px;">Status Fiche 281.20 - Jaar 2020</span>
<span class="t" style="left:1136.0px;top:307px;color:#10152f;letter-spacing:-0.123px;">Datum in dienst</span>
<span class="t" style="left:1265.8px;top:307px;color:#10152f;letter-spacing:-0.062px;">Datum uit dienst</span>
<span class="t" style="left:56.6px;top:328px;color:#000;letter-spacing:-0.336px;">100099</span>
<span class="t" style="left:185.3px;top:328px;color:#000;letter-spacing:-0.193px;">Friedman Fritz</span>
<span class="t" style="left:49.9px;top:349px;color:#000;letter-spacing:-0.336px;">100104</span>
<span class="t" style="left:167.1px;top:349px;color:#000;letter-spacing:-0.134px;">Het Lege Spaarvarken</span>
<span class="t" style="left:940.4px;top:349px;color:#000;letter-spacing:-0.250px;">Evy De Boekhouder</span>
<span class="t" style="left:1265.8px;top:349px;color:#000;letter-spacing:0.133px;">03/2021</span>
<span class="t" style="left:55.6px;top:369px;color:#10152f;letter-spacing:-0.349px;">Code</span>
<span class="t" style="left:185.3px;top:369px;color:#10152f;letter-spacing:-0.128px;">Bedrijfsleider</span>
<span class="t" style="left:576.2px;top:369px;color:#10152f;letter-spacing:-0.046px;">Laatst berekend</span>
<span class="t" style="left:706.2px;top:369px;color:#10152f;letter-spacing:0.147px;">Laatst verwerkt</span>
<span class="t" style="left:836.2px;top:369px;color:#10152f;letter-spacing:-0.092px;">Status Fiche 281.20 - Jaar 2020</span>
<span class="t" style="left:1136.0px;top:369px;color:#10152f;letter-spacing:-0.123px;">Datum in dienst</span>
<span class="t" style="left:1265.8px;top:369px;color:#10152f;letter-spacing:-0.062px;">Datum uit dienst</span>
<span class="t" style="left:56.6px;top:390px;color:#000;letter-spacing:-0.336px;">100106</span>
<span class="t" style="left:185.3px;top:390px;color:#000;letter-spacing:-0.164px;">Blut Frans</span>
<span class="t" style="left:576.2px;top:390px;color:#000;letter-spacing:0.091px;">04/2021</span>
<span class="t" style="left:706.2px;top:390px;color:#000;letter-spacing:0.091px;">04/2021</span>
<span class="t" style="left:49.9px;top:411px;color:#000;letter-spacing:-0.336px;">100096</span>
<span class="t" style="left:167.1px;top:411px;color:#000;letter-spacing:-0.247px;">La Société Française</span>
<span class="t" style="left:1265.8px;top:411px;color:#000;letter-spacing:0.133px;">03/2021</span>
<span class="t" style="left:55.6px;top:431px;color:#10152f;letter-spacing:-0.349px;">Code</span>
<span class="t" style="left:185.3px;top:431px;color:#10152f;letter-spacing:-0.128px;">Bedrijfsleider</span>
<span class="t" style="left:576.2px;top:431px;color:#10152f;letter-spacing:-0.046px;">Laatst berekend</span>
<span class="t" style="left:706.2px;top:431px;color:#10152f;letter-spacing:0.147px;">Laatst verwerkt</span>
<span class="t" style="left:836.2px;top:431px;color:#10152f;letter-spacing:-0.092px;">Status Fiche 281.20 - Jaar 2020</span>
<span class="t" style="left:1136.0px;top:431px;color:#10152f;letter-spacing:-0.123px;">Datum in dienst</span>
<span class="t" style="left:1265.8px;top:431px;color:#10152f;letter-spacing:-0.062px;">Datum uit dienst</span>
<span class="t" style="left:56.6px;top:452px;color:#000;letter-spacing:-0.336px;">100097</span>
<span class="t" style="left:185.3px;top:452px;color:#000;letter-spacing:-0.276px;">Marcolini Pierre</span>
<span class="t" style="left:576.2px;top:452px;color:#000;letter-spacing:0.091px;">04/2021</span>
<span class="t" style="left:706.2px;top:452px;color:#000;letter-spacing:0.091px;">04/2021</span>
<span class="t" style="left:49.9px;top:473px;color:#000;letter-spacing:-0.336px;">100028</span>
<span class="t" style="left:167.1px;top:473px;color:#000;letter-spacing:-0.312px;">Living Bricks</span>
<span class="t" style="left:940.4px;top:473px;color:#000;letter-spacing:-0.202px;">Thibeau Kristiansen</span>
<span class="t" style="left:1265.8px;top:473px;color:#000;letter-spacing:0.133px;">03/2021</span>
<span class="t" style="left:55.6px;top:493px;color:#10152f;letter-spacing:-0.349px;">Code</span>
<span class="t" style="left:185.3px;top:493px;color:#10152f;letter-spacing:-0.128px;">Bedrijfsleider</span>
<span class="t" style="left:576.2px;top:493px;color:#10152f;letter-spacing:-0.046px;">Laatst berekend</span>
<span class="t" style="left:706.2px;top:493px;color:#10152f;letter-spacing:0.147px;">Laatst verwerkt</span>
<span class="t" style="left:836.2px;top:493px;color:#10152f;letter-spacing:-0.092px;">Status Fiche 281.20 - Jaar 2020</span>
<span class="t" style="left:1136.0px;top:493px;color:#10152f;letter-spacing:-0.123px;">Datum in dienst</span>
<span class="t" style="left:1265.8px;top:493px;color:#10152f;letter-spacing:-0.062px;">Datum uit dienst</span>
<span class="t" style="left:56.6px;top:514px;color:#000;letter-spacing:-0.336px;">100082</span>
<span class="t" style="left:185.3px;top:514px;color:#000;letter-spacing:-0.173px;">Van Cauwenberghe Dirk</span>
<span class="t" style="left:576.2px;top:514px;color:#000;letter-spacing:0.091px;">04/2021</span>
<span class="t" style="left:706.2px;top:514px;color:#000;letter-spacing:0.091px;">04/2021</span>
<span class="t" style="left:836.2px;top:514px;color:#000;letter-spacing:-0.158px;">BOW bestand aangemaakt</span>
<span class="t" style="left:1136.0px;top:514px;color:#000;letter-spacing:0.174px;">15/02/1995</span>
<span class="t" style="left:1265.8px;top:514px;color:#000;letter-spacing:0.134px;">01/05/2021</span>
<span class="t" style="left:56.6px;top:535px;color:#000;letter-spacing:-0.336px;">100081</span>
<span class="t" style="left:185.3px;top:535px;color:#000;letter-spacing:-0.058px;">Van Cauwenberghe Jef</span>
<span class="t" style="left:576.2px;top:535px;color:#000;letter-spacing:0.091px;">04/2021</span>
<span class="t" style="left:706.2px;top:535px;color:#000;letter-spacing:0.091px;">04/2021</span>
<span class="t" style="left:836.2px;top:535px;color:#000;letter-spacing:-0.158px;">BOW bestand aangemaakt</span>
<span class="t" style="left:1136.0px;top:535px;color:#000;letter-spacing:0.174px;">01/01/2010</span>
<span class="t" style="left:56.6px;top:556px;color:#000;letter-spacing:-0.336px;">100092</span>
<span class="t" style="left:185.3px;top:556px;color:#000;letter-spacing:-0.154px;">Vercruysen Karel</span>
<span class="t" style="left:576.2px;top:556px;color:#000;letter-spacing:0.091px;">04/2021</span>
<span class="t" style="left:706.2px;top:556px;color:#000;letter-spacing:0.091px;">04/2021</span>
<span class="t" style="left:836.2px;top:556px;color:#000;letter-spacing:-0.158px;">BOW bestand aangemaakt</span>
<span class="t" style="left:1136.0px;top:556px;color:#000;letter-spacing:0.174px;">02/04/2016</span>
<span class="t" style="left:49.9px;top:577px;color:#000;letter-spacing:-0.336px;">100079</span>
<span class="t" style="left:167.1px;top:577px;color:#000;letter-spacing:-0.113px;">Transport &amp; Co</span>
<span class="t" style="left:940.4px;top:577px;color:#000;letter-spacing:-0.265px;">Thomas De Trein</span>
<span class="t" style="left:55.6px;top:597px;color:#10152f;letter-spacing:-0.349px;">Code</span>
<span class="t" style="left:185.3px;top:597px;color:#10152f;letter-spacing:-0.128px;">Bedrijfsleider</span>
<span class="t" style="left:576.2px;top:597px;color:#10152f;letter-spacing:-0.046px;">Laatst berekend</span>
<span class="t" style="left:706.2px;top:597px;color:#10152f;letter-spacing:0.147px;">Laatst verwerkt</span>
<span class="t" style="left:836.2px;top:597px;color:#10152f;letter-spacing:-0.092px;">Status Fiche 281.20 - Jaar 2020</span>
<span class="t" style="left:1136.0px;top:597px;color:#10152f;letter-spacing:-0.123px;">Datum in dienst</span>
<span class="t" style="left:1265.8px;top:597px;color:#10152f;letter-spacing:-0.062px;">Datum uit dienst</span>
<span class="t" style="left:56.6px;top:618px;color:#000;letter-spacing:-0.336px;">100091</span>
<span class="t" style="left:185.3px;top:618px;color:#000;letter-spacing:-0.286px;">Simpson Bart</span>
<span class="t" style="left:1136.0px;top:618px;color:#000;letter-spacing:0.174px;">01/01/2005</span>
<span class="t" style="left:1265.8px;top:618px;color:#000;letter-spacing:0.134px;">31/12/2012</span>
<span class="t" style="left:49.9px;top:663px;color:#000;letter-spacing:-0.336px;">100093</span>
<span class="t" style="left:167.1px;top:663px;color:#000;letter-spacing:-0.278px;">BLL For Everyone</span>
<span class="t" style="left:940.4px;top:663px;color:#000;letter-spacing:-0.202px;">Thibeau Kristiansen</span>
<span class="t" style="left:1265.8px;top:663px;color:#000;letter-spacing:0.133px;">03/2021</span>
<span class="t" style="left:55.6px;top:683px;color:#10152f;letter-spacing:-0.349px;">Code</span>
<span class="t" style="left:185.3px;top:683px;color:#10152f;letter-spacing:-0.128px;">Bedrijfsleider</span>
<span class="t" style="left:576.2px;top:683px;color:#10152f;letter-spacing:-0.046px;">Laatst berekend</span>
<span class="t" style="left:706.2px;top:683px;color:#10152f;letter-spacing:0.147px;">Laatst verwerkt</span>
<span class="t" style="left:836.2px;top:683px;color:#10152f;letter-spacing:-0.092px;">Status Fiche 281.20 - Jaar 2020</span>
<span class="t" style="left:1136.0px;top:683px;color:#10152f;letter-spacing:-0.123px;">Datum in dienst</span>
<span class="t" style="left:1265.8px;top:683px;color:#10152f;letter-spacing:-0.062px;">Datum uit dienst</span>
<span class="t" style="left:56.6px;top:704px;color:#000;letter-spacing:-0.336px;">100094</span>
<span class="t" style="left:185.3px;top:704px;color:#000;letter-spacing:-0.188px;">Loosveld Franky</span>
<span class="t" style="left:1136.0px;top:704px;color:#000;letter-spacing:0.174px;">01/05/2015</span>
<span class="t" style="left:56.6px;top:725px;color:#000;letter-spacing:-0.336px;">100095</span>
<span class="t" style="left:185.3px;top:725px;color:#000;letter-spacing:0.000px;transform-origin:0 0;transform:scaleX(0.9203);">Pallemans Guido</span>
<span class="t" style="left:56.6px;top:746px;color:#000;letter-spacing:-0.336px;">100101</span>
<span class="t" style="left:185.3px;top:746px;color:#000;letter-spacing:-0.289px;">Van Dam Alain</span>
<span class="t" style="left:576.2px;top:746px;color:#000;letter-spacing:0.091px;">04/2021</span>
<span class="t" style="left:706.2px;top:746px;color:#000;letter-spacing:0.091px;">04/2021</span>
<span class="t" style="left:836.2px;top:746px;color:#000;letter-spacing:-0.158px;">BOW bestand aangemaakt</span>
<span class="t" style="left:49.9px;top:767px;color:#000;letter-spacing:-0.336px;">100067</span>
<span class="t" style="left:167.1px;top:767px;color:#000;letter-spacing:-0.274px;">Fun@Work</span>
<span class="t" style="left:940.4px;top:767px;color:#000;letter-spacing:-0.250px;">Evy De Boekhouder</span>
<span class="t" style="left:1265.8px;top:767px;color:#000;letter-spacing:0.133px;">03/2021</span>
<span class="t" style="left:55.6px;top:787px;color:#10152f;letter-spacing:-0.349px;">Code</span>
<span class="t" style="left:185.3px;top:787px;color:#10152f;letter-spacing:-0.128px;">Bedrijfsleider</span>
<span class="t" style="left:576.2px;top:787px;color:#10152f;letter-spacing:-0.046px;">Laatst berekend</span>
<span class="t" style="left:706.2px;top:787px;color:#10152f;letter-spacing:0.147px;">Laatst verwerkt</span>
<span class="t" style="left:836.2px;top:787px;color:#10152f;letter-spacing:-0.092px;">Status Fiche 281.20 - Jaar 2020</span>
<span class="t" style="left:1136.0px;top:787px;color:#10152f;letter-spacing:-0.123px;">Datum in dienst</span>
<span class="t" style="left:1265.8px;top:787px;color:#10152f;letter-spacing:-0.062px;">Datum uit dienst</span>
<span class="t" style="left:56.6px;top:808px;color:#000;letter-spacing:-0.336px;">100084</span>
<span class="t" style="left:185.3px;top:808px;color:#000;letter-spacing:-0.209px;">De Ridder Evy</span>
<span class="t" style="left:576.2px;top:808px;color:#000;letter-spacing:0.091px;">04/2021</span>
<span class="t" style="left:706.2px;top:808px;color:#000;letter-spacing:0.091px;">04/2021</span>
<span class="t" style="left:836.2px;top:808px;color:#000;letter-spacing:-0.158px;">BOW bestand aangemaakt</span>
<span class="t" style="left:1136.0px;top:808px;color:#000;letter-spacing:0.174px;">02/04/2016</span>
<span class="t" style="left:49.9px;top:829px;color:#000;letter-spacing:-0.336px;">100107</span>
<span class="t" style="left:167.1px;top:829px;color:#000;letter-spacing:-0.115px;">PA zonder zorgen</span>
<span class="t" style="left:940.4px;top:829px;color:#000;letter-spacing:-0.250px;">Evy De Boekhouder</span>
<span class="t" style="left:55.6px;top:849px;color:#10152f;letter-spacing:-0.349px;">Code</span>
<span class="t" style="left:185.3px;top:849px;color:#10152f;letter-spacing:-0.128px;">Bedrijfsleider</span>
<span class="t" style="left:576.2px;top:849px;color:#10152f;letter-spacing:-0.046px;">Laatst berekend</span>
<span class="t" style="left:706.2px;top:849px;color:#10152f;letter-spacing:0.147px;">Laatst verwerkt</span>
<span class="t" style="left:836.2px;top:849px;color:#10152f;letter-spacing:-0.092px;">Status Fiche 281.20 - Jaar 2020</span>
<span class="t" style="left:1136.0px;top:849px;color:#10152f;letter-spacing:-0.123px;">Datum in dienst</span>
<span class="t" style="left:1265.8px;top:849px;color:#10152f;letter-spacing:-0.062px;">Datum uit dienst</span>
<span class="t" style="left:56.6px;top:870px;color:#000;letter-spacing:-0.336px;">100108</span>
<span class="t" style="left:185.3px;top:870px;color:#000;letter-spacing:-0.292px;">Zorgeloos Sascha</span>
</div></div>
</body></html>
